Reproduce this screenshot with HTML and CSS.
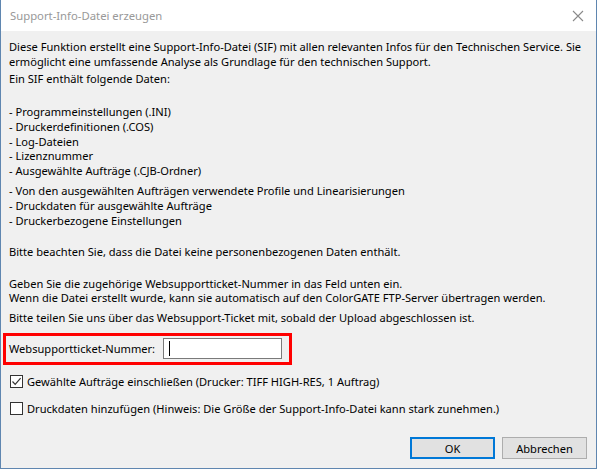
FILE: index.html
```html
<!DOCTYPE html>
<html lang="de">
<head>
<meta charset="utf-8">
<title>Support-Info-Datei erzeugen</title>
<link rel="stylesheet" href="styles.css">
</head>
<body>
<div class="window">
  <div class="titlebar">
    <span class="title">Support-Info-Datei erzeugen</span>
    <svg class="close" width="12" height="12" viewBox="0 0 12 12"><path d="M1 1L11 11M11 1L1 11" stroke="#8a8a8a" stroke-width="1.1" fill="none"/></svg>
  </div>
  <div class="content">
    <p class="block intro">Diese Funktion erstellt eine Support-Info-Datei (SIF) mit allen relevanten Infos für den Technischen Service. Sie<br>ermöglicht eine umfassende Analyse als Grundlage für den technischen Support.</p>
    <p class="block sif">Ein SIF enthält folgende Daten:</p>
    <p class="block list1">- Programmeinstellungen (.INI)<br>- Druckerdefinitionen (.COS)<br>- Log-Dateien<br>- Lizenznummer<br>- Ausgewählte Aufträge (.CJB-Ordner)</p>
    <p class="block list2">- Von den ausgewählten Aufträgen verwendete Profile und Linearisierungen<br>- Druckdaten für ausgewählte Aufträge<br>- Druckerbezogene Einstellungen</p>
    <p class="block note">Bitte beachten Sie, dass die Datei keine personenbezogenen Daten enthält.</p>
    <p class="block geben">Geben Sie die zugehörige Websupportticket-Nummer in das Feld unten ein.<br>Wenn die Datei erstellt wurde, kann sie automatisch auf den ColorGATE FTP-Server übertragen werden.</p>
    <p class="block teilen">Bitte teilen Sie uns über das Websupport-Ticket mit, sobald der Upload abgeschlossen ist.</p>
    <div class="ticket">
      <span class="ticket-label">Websupportticket-Nummer:</span>
      <span class="ticket-input"><span class="caret"></span></span>
    </div>
    <div class="check check1">
      <span class="box"><svg width="11" height="11" viewBox="0 0 11 11"><path d="M1.5 5.5L4.2 8.3L9.6 2.2" stroke="#333" stroke-width="1.2" fill="none"/></svg></span>
      <span>Gewählte Aufträge einschließen (Drucker: TIFF HIGH-RES, 1 Auftrag)</span>
    </div>
    <div class="check check2">
      <span class="box"></span>
      <span>Druckdaten hinzufügen (Hinweis: Die Größe der Support-Info-Datei kann stark zunehmen.)</span>
    </div>
  </div>
  <div class="buttons">
    <span class="btn btn-default">OK</span>
    <span class="btn">Abbrechen</span>
  </div>
</div>
</body>
</html>
```
FILE: styles.css
```css
html, body {
  margin: 0;
  padding: 0;
  background: #f0f0f0;
}
.window {
  width: 597px;
  height: 469px;
  box-sizing: border-box;
  border: 1px solid #5f86b0;
  border-top: none;
  background: #f0f0f0;
  font-family: "Noto Sans", "Liberation Sans", sans-serif;
  font-size: 11.1px;
  color: #000;
  display: flex;
  flex-direction: column;
}
.titlebar {
  height: 31px;
  background: #fff;
  display: flex;
  align-items: center;
  justify-content: space-between;
  padding: 0 9px 0 9px;
  flex: none;
}
.title {
  color: #999;
  font-size: 11.3px;
}
.close {
  margin-right: 3px;
}
.content {
  padding: 0 8px;
  flex: 1;
}
.block {
  margin: 0;
  line-height: 15px;
  white-space: nowrap;
}
.intro { margin-top: 8px; }
.sif { margin-top: 2px; }
.list1 { margin-top: 19px; line-height: 14.8px; }
.list2 { margin-top: 4px; }
.note { margin-top: 16px; }
.geben { margin-top: 18px; line-height: 14px; }
.teilen { margin-top: 5px; }
.ticket {
  margin: 8px 0 0 -6px;
  width: 289px;
  height: 32px;
  box-sizing: border-box;
  border: 3px solid #ff0000;
  display: flex;
  align-items: center;
  padding-left: 3px;
}
.ticket-label {
  width: 154px;
}
.ticket-input {
  width: 119px;
  height: 21px;
  box-sizing: border-box;
  border: 1px solid #7a7a7a;
  background: #fff;
  display: flex;
  align-items: center;
  padding-left: 5px;
}
.caret {
  width: 1px;
  height: 15px;
  background: #000;
}
.check {
  display: flex;
  align-items: center;
  gap: 4px;
  padding-left: 1px;
  height: 15px;
}
.check1 { margin-top: 9px; }
.check2 { margin-top: 12px; }
.box {
  width: 13px;
  height: 13px;
  box-sizing: border-box;
  border: 1px solid #333;
  background: #fff;
  display: flex;
  align-items: center;
  justify-content: center;
}
.buttons {
  display: flex;
  justify-content: flex-end;
  gap: 7px;
  padding: 0 9px 9px 0;
  flex: none;
}
.btn {
  width: 85px;
  height: 22px;
  box-sizing: border-box;
  border: 1px solid #adadad;
  background: #e1e1e1;
  display: flex;
  align-items: center;
  justify-content: center;
}
.btn-default {
  border: 2px solid #0078d7;
}
```
